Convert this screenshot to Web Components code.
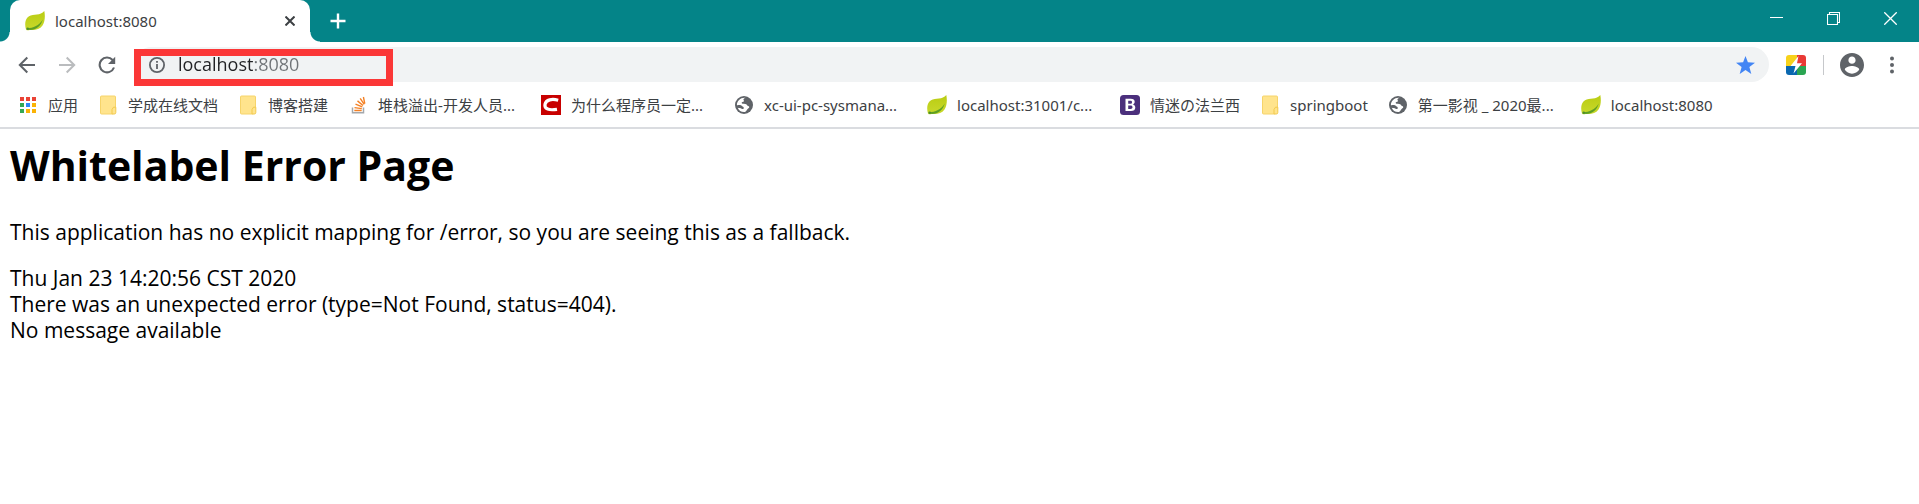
<!DOCTYPE html>
<html lang="zh-CN">
<head>
<meta charset="utf-8">
<title>localhost:8080</title>
<style>
  body {
    margin: 0;
    background: #fff;
    font-family: "Noto Sans", "Noto Sans CJK SC", sans-serif;
    color: #3c4043;
  }
</style>
</head>
<body>
<browser-window></browser-window>

<template id="t-window">
  <style>
    :host { display: block; }
  </style>
  <tab-strip>
    <browser-tab>localhost:8080</browser-tab>
  </tab-strip>
  <tool-bar></tool-bar>
  <bookmark-bar>
    <bookmark-item icon="apps">应用</bookmark-item>
    <bookmark-item icon="folder">学成在线文档</bookmark-item>
    <bookmark-item icon="folder">博客搭建</bookmark-item>
    <bookmark-item icon="stack" cut>堆栈溢出-开发人员...</bookmark-item>
    <bookmark-item icon="csdn" cut>为什么程序员一定...</bookmark-item>
    <bookmark-item icon="globe" cut>xc-ui-pc-sysmana...</bookmark-item>
    <bookmark-item icon="leaf" cut>localhost:31001/c...</bookmark-item>
    <bookmark-item icon="bootstrap">情迷の法兰西</bookmark-item>
    <bookmark-item icon="folder">springboot</bookmark-item>
    <bookmark-item icon="globe" cut>第一影视 _ 2020最...</bookmark-item>
    <bookmark-item icon="leaf">localhost:8080</bookmark-item>
  </bookmark-bar>
  <error-page></error-page>
</template>

<template id="t-tabs">
  <style>
    :host { display: flex; height: 42px; padding-left: 10px; background: #048488; }
    button { border: 0; padding: 0; background: none; display: flex; align-items: center; justify-content: center; }
    .new { width: 36px; margin-left: 10px; }
    .controls { display: flex; margin-left: auto; }
    .controls button { width: 57px; height: 36px; }
    svg { display: block; }
  </style>
  <slot></slot>
  <button class="new" aria-label="New tab"><svg width="16" height="16" viewBox="0 0 16 16" stroke="#fff" stroke-width="2.4"><path d="M8 .5v15M.5 8h15"/></svg></button>
  <div class="controls">
    <button aria-label="Minimize"><svg width="13" height="13" viewBox="0 0 13 13"><path d="M0 5.5h13" stroke="#fff"/></svg></button>
    <button aria-label="Restore"><svg width="13" height="13" viewBox="0 0 13 13" fill="none" stroke="#fff" stroke-width="1.1"><path d="M.5 2.5h10v10H.5zM2.5 2.5v-2h10v10h-2"/></svg></button>
    <button aria-label="Close"><svg width="13" height="13" viewBox="0 0 13 13" stroke="#fff" stroke-width="1.3"><path d="M.3.3l12.4 12.4M12.7.3L.3 12.7"/></svg></button>
  </div>
</template>

<template id="t-tab">
  <style>
    :host {
      position: relative; box-sizing: border-box; width: 300px; height: 42px;
      display: flex; align-items: center; gap: 10px; padding: 0 15px;
      background: #fff; border-radius: 10px 10px 0 0; font-size: 15px; line-height: 20px;
    }
    :host::before, :host::after {
      content: ""; position: absolute; bottom: 0; width: 10px; height: 10px;
    }
    :host::before { left: -10px; background: radial-gradient(circle at 0 0, transparent 9px, #fff 10px); }
    :host::after { right: -10px; background: radial-gradient(circle at 100% 0, transparent 9px, #fff 10px); }
    span { flex: 1; }
    button { border: 0; padding: 0; background: none; }
    svg { display: block; }
  </style>
  <glyph-icon name="leaf"></glyph-icon>
  <span><slot></slot></span>
  <button aria-label="Close tab"><svg width="10" height="10" viewBox="0 0 10 10" stroke="#3c4043" stroke-width="2"><path d="M.5.5l9 9M9.5.5l-9 9"/></svg></button>
</template>

<template id="t-toolbar">
  <style>
    :host { display: flex; align-items: center; height: 35px; padding: 5px 7px; }
    button { border: 0; padding: 0; background: none; width: 40px; height: 35px; display: flex; align-items: center; justify-content: center; flex: none; }
    svg { display: block; }
    address-box { flex: 1; margin: 0 10px 0 7px; }
    .ext { width: 34px; }
    .line { width: 1px; height: 20px; background: #c6c8cb; margin: 0 8px 0 10px; }
  </style>
  <button aria-label="Back"><svg width="18" height="18" viewBox="0 0 18 18" fill="none" stroke="#5f6368" stroke-width="2"><path d="M17 9H2M9.3 1.5L1.8 9l7.5 7.5"/></svg></button>
  <button aria-label="Forward" disabled><svg width="18" height="18" viewBox="0 0 18 18" fill="none" stroke="#babcbe" stroke-width="2"><path d="M1 9h15M8.7 1.5L16.2 9l-7.5 7.5"/></svg></button>
  <button aria-label="Reload"><svg width="18" height="18" viewBox="0 0 18 18"><path d="M14.6 4A7.4 7.4 0 1 0 16 11.5" fill="none" stroke="#5f6368" stroke-width="2.1"/><path d="M17.2.8v7.2H10z" fill="#5f6368"/></svg></button>
  <address-box></address-box>
  <button class="ext" aria-label="Extension"><svg width="20" height="20" viewBox="0 0 20 20"><defs><clipPath id="r"><rect width="20" height="20" rx="3"/></clipPath></defs><g clip-path="url(#r)"><path d="M0 0h11v11H0z" fill="#f7d21b"/><path d="M11 0h9v11h-9z" fill="#e93a35"/><path d="M0 11h11v9H0z" fill="#0a68b0"/><path d="M11 11h9v9h-9z" fill="#2aa552"/><path d="M12.500 1L4.500 11h5L7.500 18.500 16 8.200h-5z" fill="#fff"/></g></svg></button>
  <span class="line"></span>
  <button aria-label="Profile"><svg width="24" height="24" viewBox="2 2 20 20" fill="#5f6368"><path d="M12 2C6.48 2 2 6.48 2 12s4.48 10 10 10 10-4.48 10-10S17.52 2 12 2zm0 3c1.66 0 3 1.34 3 3s-1.34 3-3 3-3-1.34-3-3 1.34-3 3-3zm0 14.2c-2.5 0-4.71-1.28-6-3.22.03-1.99 4-3.08 6-3.08 1.99 0 5.97 1.09 6 3.08-1.29 1.94-3.5 3.22-6 3.22z"/></svg></button>
  <button aria-label="Menu"><svg width="4" height="18" viewBox="0 0 4 18" fill="#5f6368"><circle cx="2" cy="2.5" r="2"/><circle cx="2" cy="9" r="2"/><circle cx="2" cy="15.5" r="2"/></svg></button>
</template>

<template id="t-address">
  <style>
    :host {
      position: relative; display: flex; align-items: center; box-sizing: border-box;
      height: 35px; padding: 0 14px 0 15px; gap: 13px; background: #f1f3f4; border-radius: 18px;
    }
    svg { display: block; flex: none; }
    input {
      flex: 1; min-width: 0; border: 0; padding: 0 0 2px; outline: 0; height: 28px;
      font: 18px/28px "Open Sans", sans-serif;
      color: transparent;
      background: linear-gradient(90deg, #202124 76px, #6f7377 76px);
      -webkit-background-clip: text; background-clip: text;
    }
    button { border: 0; padding: 0; background: none; }
    .mark {
      position: absolute; left: 0; top: 2px; box-sizing: border-box;
      width: 259px; height: 37px; border: 7px solid #fb3737; pointer-events: none;
    }
  </style>
  <svg width="16" height="16" viewBox="0 0 16 16"><circle cx="8" cy="8" r="7.1" fill="none" stroke="#5f6368" stroke-width="1.8"/><path d="M7.1 7h1.8v5H7.1zM7.1 4h1.8v1.8H7.1z" fill="#5f6368"/></svg>
  <input aria-label="Address" value="localhost:8080" spellcheck="false">
  <button aria-label="Bookmark this page"><svg width="19" height="18" viewBox="0 0 19 18"><path d="M9.5 0l2.4 6.3 7.1.4-5.6 4.4 1.9 6.9-5.8-3.9L3.700 18l1.900-6.900L0 6.700l7.100-.4z" fill="#4285f4"/></svg></button>
  <div class="mark"></div>
</template>

<template id="t-bookmarks">
  <style>
    :host { display: flex; align-items: center; height: 36px; gap: 20px; padding: 0 18px 4px; border-bottom: 2px solid #dadce0; overflow: hidden; }
  </style>
  <slot></slot>
</template>

<template id="t-bookmark">
  <style>
    :host { display: block; flex: none; }
    a { display: flex; align-items: center; gap: 10px; color: #3c4043; text-decoration: none; font-size: 15px; line-height: 22px; white-space: nowrap; }
    :host([cut]) span { width: 143px; }
  </style>
  <a href="#"><glyph-icon></glyph-icon><span><slot></slot></span></a>
</template>

<template id="t-error">
  <style>
    :host { display: block; padding: 8px 10px; color: #000; font: 21px/26px "Open Sans", sans-serif; }
    h1 { margin: 0 0 26px; font-size: 41px; line-height: 56px; font-weight: 700; }
    p { margin: 0 0 20px; }
  </style>
  <h1>Whitelabel Error Page</h1>
  <p>This application has no explicit mapping for /error, so you are seeing this as a fallback.</p>
  <div>Thu Jan 23 14:20:56 CST 2020<br>There was an unexpected error (type=Not Found, status=404).<br>No message available</div>
</template>

<script>
const icons = {
  leaf: '<defs><linearGradient id="g" x1="0" y1="0" x2="0" y2="1"><stop offset="0" stop-color="#b9cc12"/><stop offset="1" stop-color="#c9d92c"/></linearGradient></defs><path d="M19.3 0C20.3 5 20 11 17.5 14.5c-3 4.3-8.5 5-12.5 4.3-1.5.9-3.300.7-4-.3C-.3 14-.5 8 4 5.200 8.500 2.500 15.500 5 19.300 0z" fill="url(#g)"/><path d="M2 17.2c6.500-.2 12-2.500 15.700-8.700-1.700 6.800-7 11.200-14.700 10.300z" fill="#5d9f24"/><circle cx="2.7" cy="17.7" r="1.3" fill="#4c8f2c"/>',
  folder: '<path d="M3.5 1h13a1 1 0 0 1 1 1v10.5l-3 6.5h-11a1 1 0 0 1-1-1V2a1 1 0 0 1 1-1z" fill="#ffe48d" stroke="#f6d46a"/><path d="M14 19v-4.500l1.500-2.300h2.300V17.500a1.500 1.500 0 0 1-1.500 1.500z" fill="#ffe48d" stroke="#f2c94c"/>',
  apps: '<g transform="translate(1 1)"><path d="M1 1h4v4H1zM7 1h4v4H7zM13 1h4v4h-4z" fill="#ea4335"/><path d="M1 7h4v4H1zM1 13h4v4H1z" fill="#34a853"/><path d="M7 7h4v4H7z" fill="#2f86f6"/><path d="M13 7h4v4h-4zM7 13h4v4H7zM13 13h4v4h-4z" fill="#fbb305"/></g>',
  stack: '<path d="M4.500 12.500v5.300h11v-5.300" fill="none" stroke="#a4a8ac" stroke-width="1.5"/><g stroke="#f48024" stroke-width="1.4"><path d="M6.300 15.500h7.400M6.500 12.600l7.300 1M7.500 9.200l6.800 2.700M9.500 5.900l5.500 4.600M12.200 3.400l4 6M15.400 2l1.400 6.600"/></g>',
  csdn: '<path d="M0 0h20v20H0z" fill="#c80000"/><path d="M17.2 5.200C11 3.600 5 4.500 4 9.300c-.9 4.800 4 6.300 12 5" fill="none" stroke="#fff" stroke-width="3.2"/>',
  globe: '<circle cx="10" cy="10" r="9" fill="#5f6368"/><path d="M11.500 2.900C9.500 3 9 4.600 9.800 5.500c.7.8-.4 1.400-1.300 1.500-1.200.1-1 1.600.2 1.800 1.600.2 3.600-.2 4.300 1.100.6 1.200 1.800.8 2.200 1.900.4 1.600-1.700 1.700-2.200 2.900-.4 1-1.500 2.400-2.900 2.400-3 0-5.400-1.700-6.400-4.300 1.700.3 2.600.2 3.900 1 1 .6 2.200.2 2.200-.8 0-1.200-1.200-1.300-1.800-2-.8-.9-2.200-1-3.200-.9-.8.100-1.500.1-1.900-.2C2.900 6 6.800 2.300 11.500 2.900z" fill="#fff"/>',
  bootstrap: '<rect width="20" height="20" rx="3.5" fill="#4b2f7c"/><path fill="#fff" fill-rule="evenodd" d="M5.500 3.800h5.200c2.700 0 4 1.100 4 2.900 0 1.400-.8 2.300-1.900 2.700 1.500.3 2.500 1.400 2.500 3 0 2.300-1.600 3.600-4.400 3.600H5.500zm2.700 2v2.900h2.100c1.200 0 1.700-.5 1.700-1.500s-.6-1.400-1.700-1.400zm0 4.800v3.300h2.300c1.300 0 2-.5 2-1.600 0-1.200-.7-1.700-2-1.700z"/>'
};

class View extends HTMLElement {
  constructor() {
    super();
    this.attachShadow({ mode: 'open' });
    const t = document.getElementById(this.constructor.template);
    if (t) this.shadowRoot.append(t.content.cloneNode(true));
  }
}

customElements.define('glyph-icon', class extends HTMLElement {
  static observedAttributes = ['name'];
  constructor() { super(); this.attachShadow({ mode: 'open' }); }
  attributeChangedCallback(_, __, name) {
    this.shadowRoot.innerHTML = `<style>:host{display:block;flex:none;width:20px;height:20px}svg{display:block}</style>
      <svg width="20" height="20" viewBox="0 0 20 20" aria-hidden="true">${icons[name] || ''}</svg>`;
  }
});
customElements.define('bookmark-item', class extends View {
  static template = 't-bookmark';
  connectedCallback() {
    this.shadowRoot.querySelector('glyph-icon').setAttribute('name', this.getAttribute('icon'));
  }
});
const views = {
  'browser-tab': 't-tab', 'tab-strip': 't-tabs', 'address-box': 't-address', 'tool-bar': 't-toolbar',
  'bookmark-bar': 't-bookmarks', 'error-page': 't-error', 'browser-window': 't-window'
};
for (const [tag, id] of Object.entries(views))
  customElements.define(tag, class extends View { static template = id; });
</script>
</body>
</html>
